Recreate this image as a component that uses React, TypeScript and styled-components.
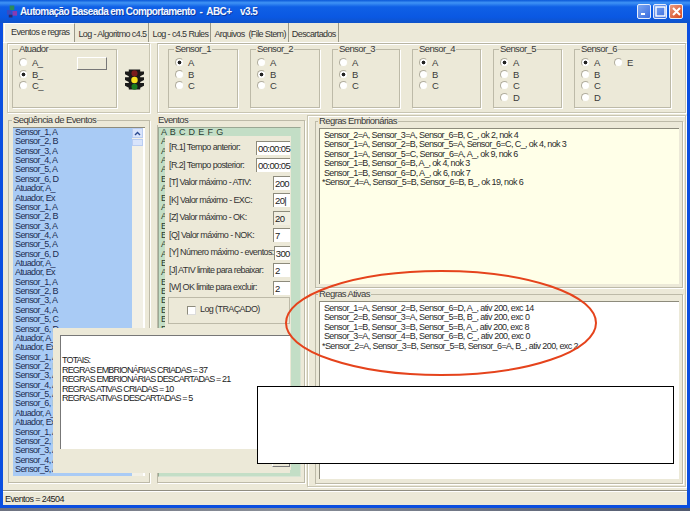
import React from "react";
import styled, { createGlobalStyle } from "styled-components";

const Global = createGlobalStyle`
  html, body { margin: 0; padding: 0; background: #5c6880; }
  * { box-sizing: border-box; }
  body { font-family: "Liberation Sans", Arial, sans-serif; font-size: 9px; letter-spacing: -0.6px; color: #2c2c2c; }
`;

const Screen = styled.div`
  position: relative;
  width: 690px;
  height: 511px;
  overflow: hidden;
  background: linear-gradient(90deg, #6d7280, #8a8f98 40%, #50596e);
`;
const Window = styled.div`
  width: 690px;
  height: 508px;
  display: flex;
  flex-direction: column;
  background: #0b4fe0;
  padding: 0 3px 3px 3px;
`;
const TitleBar = styled.div`
  height: 23px;
  margin: 0 -3px;
  padding: 0 7px 0 6px;
  display: flex;
  align-items: center;
  background: linear-gradient(180deg, #0a58d8 0%, #3f93f5 12%, #0f60e6 30%, #0a58e2 75%, #0f52c8 100%);
`;
const Title = styled.div`
  flex: 1;
  margin-left: 2px;
  font-weight: 700;
  font-size: 10px;
  letter-spacing: -0.6px;
  color: #f4f8ff;
  white-space: pre;
  text-shadow: 1px 1px 0 #0a3aa0;
`;
const WinBtn = styled.div<{ $close?: boolean }>`
  width: 14px;
  height: 15px;
  margin-left: 2px;
  border: 1px solid #e8eefc;
  border-radius: 2px;
  display: flex;
  align-items: center;
  justify-content: center;
  background: ${(p) => (p.$close ? "linear-gradient(135deg,#e89a80,#d8481c)" : "linear-gradient(135deg,#7ca6f0,#3a6ce0)")};
`;
const Client = styled.div`
  flex: 1;
  display: flex;
  flex-direction: column;
  background: #ece9d8;
  min-height: 0;
`;
const TabStrip = styled.div`
  height: 19px;
  display: flex;
  align-items: center;
  padding: 0 0 0 1px;
  color: #333;
`;
const Tab = styled.div<{ $active?: boolean }>`
  height: 100%;
  display: flex;
  align-items: center;
  padding: ${(p) => (p.$active ? "0 5px 2px 6px" : "3px 2px 0 3px")};
  white-space: pre;
  border-right: 1px solid #9a9888;
  ${(p) => (p.$active ? "border-left: 1px solid #fff; border-top: 1px solid #fff;" : "")}
  background: ${(p) => (p.$active ? "#f1efe2" : "transparent")};
`;
const TabPanel = styled.div`
  flex: 1;
  min-height: 0;
  display: flex;
  flex-direction: column;
  border-top: 1px solid #fff;
  border-bottom: 1px solid #8f8d80;
  padding: 0 1px 0 4px;
`;
const TopRow = styled.div`
  height: 70px;
  display: flex;
  gap: 7px;
`;
const Frame = styled.div<{ $w?: number }>`
  ${(p) => (p.$w ? `width:${p.$w}px;` : "flex:1;")}
  border: 1px solid #c8c5b2;
  border-top-color: #b8b5a2;
  box-shadow: inset 1px 1px 0 #fff, 1px 1px 0 #fff;
  display: flex;
  align-items: flex-start;
  padding: 0 0 0 ${(p) => (p.$w ? 4 : 10)}px;
`;
const Group = styled.fieldset<{ $w: number }>`
  margin: 0;
  padding: 3px 0 0 6px;
  width: ${(p) => p.$w}px;
  height: 64px;
  border: 1px solid #bdbaa8;
  box-shadow: 1px 1px 0 #fff;
  display: flex;
`;
const Legend = styled.legend`
  padding: 0 1px;
  margin-left: -1px;
  font-size: 9.5px;
  line-height: 10px;
  color: #3a3a3a;
`;
const RadioCol = styled.div`
  display: flex;
  flex-direction: column;
  width: 33px;
`;
const RadioRow = styled.div`
  height: 11.6px;
  display: flex;
  align-items: center;
  gap: 4px;
  font-size: 9.5px;
  color: #3a3a3a;
`;
const RadioDot = styled.span<{ $on?: boolean }>`
  width: 9px;
  height: 9px;
  border-radius: 50%;
  background: ${(p) => (p.$on ? "radial-gradient(circle, #222 0 1.6px, #fff 2.2px)" : "#fff")};
  border: 1px solid #b0ad9c;
  border-bottom-color: #ece9d8;
  border-right-color: #ece9d8;
  flex: none;
`;
const PushBtn = styled.div`
  width: 30px;
  height: 13px;
  margin: 0 0 0 25px;
  background: #ece9d8;
  border: 1px solid #fff;
  border-right-color: #777;
  border-bottom-color: #777;
`;
const Light = styled.svg`
  width: 19px;
  height: 25px;
  margin: 24px 0 0 8px;
  flex: none;
`;
const MainRow = styled.div`
  flex: 1;
  min-height: 0;
  display: flex;
  padding-top: 2px;
`;
const EventsBox = styled.fieldset`
  margin: 0 0 0 1px;
  padding: 2px 4px 7px 4px;
  width: 142px;
  height: 368px;
  border: 1px solid #bdbaa8;
  box-shadow: 1px 1px 0 #fff;
  display: flex;
`;
const SeqList = styled.div`
  flex: 1;
  height: 349px;
  display: flex;
  background: #fff;
  overflow: hidden;
  border-top: 1px solid #8d8b7c;
`;
const SeqItems = styled.div`
  width: 119px;
  height: 100%;
  background: #a9cbf5;
  overflow: hidden;
  padding: 0 0 0 2px;
  color: #1c2c52;
  line-height: 9.37px;
`;
const SeqRow = styled.div`
  height: 9.37px;
  white-space: pre;
`;
const ScrollTrack = styled.div`
  width: 11px;
  background: #f2f0e6;
  display: flex;
  flex-direction: column;
`;
const ScrollUp = styled.div`
  height: 10px;
  background: #d8e4fb;
  border: 1px solid #b9cdf2;
  display: flex;
  align-items: center;
  justify-content: center;
`;
const ScrollThumb = styled.div`
  height: 7px;
  margin-top: 1px;
  background: #d8e4fb;
  border: 1px solid #b9cdf2;
`;
const MidBox = styled(EventsBox)`
  margin-left: 7px;
  width: 148px;
  padding: 2px 0 0 0;
`;
const GreenList = styled.div`
  position: relative;
  width: 143px;
  height: 350px;
  background: #c3dec6;
  border: 1px solid #d8e4d4;
  border-top-color: #9aa894;
  border-left-color: #9aa894;
  overflow: hidden;
  padding-left: 2px;
  line-height: 9.37px;
  color: #2c3c30;
`;
const Params = styled.div`
  position: absolute;
  left: 6px;
  top: 8px;
  width: 126px;
  bottom: 6px;
  background: #ece9d8;
  display: flex;
  flex-direction: column;
  padding: 3px 1px 0 4px;
`;
const ParamRow = styled.div`
  height: 17.5px;
  display: flex;
  align-items: center;
  justify-content: space-between;
  color: #333;
  white-space: pre;
`;
const ParamInput = styled.div<{ $w: number; $grey?: boolean }>`
  width: ${(p) => p.$w}px;
  height: 14px;
  background: ${(p) => (p.$grey ? "#f1efe2" : "#fff")};
  border-top: 1px solid #8d8b7c;
  border-left: 1px solid #8d8b7c;
  font-size: 9.5px;
  line-height: 13px;
  padding-left: 1px;
  color: #222;
`;
const LogBox = styled.div`
  width: 122px;
  height: 27px;
  margin-left: -1px;
  border: 1px solid #bdbaa8;
  display: flex;
  align-items: center;
  padding-left: 18px;
  gap: 4px;
  color: #333;
`;
const Check = styled.span`
  width: 9px;
  height: 9px;
  background: #fff;
  border: 1px solid #8d8b7c;
  border-right-color: #ddd;
  border-bottom-color: #ddd;
`;
const RulesCol = styled.div`
  flex: 1;
  display: flex;
  flex-direction: column;
  margin: 0 0 3px 2px;
  padding: 0 2px 0 7px;
  gap: 1px;
  border: 1px solid #c8c5b2;
  box-shadow: inset 1px 1px 0 #fff, 1px 1px 0 #fff;
`;
const RuleBox = styled.fieldset<{ $h: number }>`
  margin: 0;
  padding: 2px 3px 4px 3px;
  height: ${(p) => p.$h}px;
  border: 1px solid #bdbaa8;
  box-shadow: 1px 1px 0 #fff;
  display: flex;
`;
const RuleText = styled.div<{ $bg: string; $h: number }>`
  flex: 1;
  height: ${(p) => p.$h}px;
  background: ${(p) => p.$bg};
  border-top: 1px solid #8d8b7c;
  border-left: 1px solid #8d8b7c;
  padding: 2px 0 0 2px;
  line-height: 9.37px;
  color: #2a2a2a;
  white-space: pre;
`;
const StatusBar = styled.div`
  height: 14px;
  display: flex;
  align-items: center;
  padding-left: 2px;
  color: #222;
  border-top: 1px solid #fff;
`;
const Dialog = styled.div`
  position: absolute;
  left: 53px;
  top: 328px;
  width: 237px;
  height: 145px;
  background: #ece9d8;
  padding: 7px 0 0 7px;
  display: flex;
  flex-direction: column;
  align-items: flex-end;
`;
const DialogText = styled.div`
  width: 100%;
  height: 114px;
  background: #fff;
  border-top: 1px solid #777;
  border-left: 1px solid #777;
  padding: 20px 0 0 1px;
  letter-spacing: -0.85px;
  line-height: 9.5px;
  color: #1c1c1c;
  white-space: pre;
`;
const DialogBtn = styled.div`
  width: 18px;
  height: 15px;
  margin: 3px 0 0 0;
  background: #ece9d8;
  border: 1px solid #fff;
  border-right-color: #777;
  border-bottom-color: #777;
`;
const WhiteOut = styled.div`
  position: absolute;
  left: 257px;
  top: 386px;
  width: 417px;
  height: 78px;
  background: #fff;
  border: 1px solid #000;
`;
const Ellipse = styled.svg`
  position: absolute;
  left: 280px;
  top: 265px;
  width: 322px;
  height: 116px;
  pointer-events: none;
`;
const SensorRow = styled.div`
  display: flex;
`;
const Spacer = styled.div<{ $w: number }>`
  width: ${(p) => p.$w}px;
  flex: none;
`;

const sensors: { name: string; w: number; opts: string[]; on: string; gap: number; extra?: string }[] = [
  { name: "Sensor_1", w: 70, opts: ["A", "B", "C"], on: "A", gap: 11 },
  { name: "Sensor_2", w: 70, opts: ["A", "B", "C"], on: "B", gap: 12 },
  { name: "Sensor_3", w: 68, opts: ["A", "B", "C"], on: "B", gap: 12 },
  { name: "Sensor_4", w: 69, opts: ["A", "B", "C"], on: "A", gap: 12 },
  { name: "Sensor_5", w: 69, opts: ["A", "B", "C", "D"], on: "A", gap: 12 },
  { name: "Sensor_6", w: 97, opts: ["A", "B", "C", "D"], on: "A", gap: 12, extra: "E" },
];

const cycle = (a: string, b: string, c: string, d: string, e: string, f: string) => [
  `Sensor_1, ${a}`, `Sensor_2, ${b}`, `Sensor_3, ${c}`, `Sensor_4, ${d}`, `Sensor_5, ${e}`, `Sensor_6, ${f}`, "Atuador, A_", "Atuador, Ex",
];
const seq = [
  ...cycle("A", "B", "A", "A", "A", "D"),
  ...cycle("A", "B", "A", "A", "A", "D"),
  ...cycle("A", "B", "A", "A", "C", "D"),
  ...cycle("A", "B", "A", "A", "A", "D"),
  ...cycle("A", "B", "A", "A", "A", "D"),
].slice(0, 37);

const greens = "A,A,A,A,A,E,A,E,A,A,E,E,A,A,E,A,E,E,E,E,E,E,A,A,E,E,A,A,E,E,E,A,A,E,E,E,E".split(",");

const params: [string, string, number, boolean?][] = [
  ["[R.1] Tempo anterior:", "00:00:05", 34],
  ["[R.2] Tempo posterior:", "00:00:05", 34],
  ["[T] Valor máximo - ATIV:", "200", 17],
  ["[K] Valor máximo - EXC:", "20|", 17],
  ["[Z] Valor máximo - OK:", "20", 17, true],
  ["[Q] Valor máximo - NOK:", "7", 17],
  ["[Y] Número máximo - eventos:", "300", 17],
  ["[J] ATIV limite para rebaixar:", "2", 17],
  ["[W] OK limite para excluir:", "2", 17],
];

const embr = [
  " Sensor_2=A, Sensor_3=A, Sensor_6=B, C_, ok 2, nok 4",
  " Sensor_1=A, Sensor_2=B, Sensor_5=A, Sensor_6=C, C_, ok 4, nok 3",
  " Sensor_1=A, Sensor_5=C, Sensor_6=A, A_, ok 9, nok 6",
  " Sensor_1=B, Sensor_6=B, A_, ok 4, nok 3",
  " Sensor_1=B, Sensor_6=D, A_, ok 6, nok 7",
  "*Sensor_4=A, Sensor_5=B, Sensor_6=B, B_, ok 19, nok 6",
].join("\n");
const ativ = [
  " Sensor_1=A, Sensor_2=B, Sensor_6=D, A_, ativ 200, exc 14",
  " Sensor_2=B, Sensor_3=A, Sensor_5=B, B_, ativ 200, exc 0",
  " Sensor_1=B, Sensor_3=B, Sensor_5=B, A_, ativ 200, exc 8",
  " Sensor_3=A, Sensor_4=B, Sensor_6=B, C_, ativ 200, exc 0",
  "*Sensor_2=A, Sensor_3=B, Sensor_5=B, Sensor_6=A, B_, ativ 200, exc 2",
].join("\n");
const totals = [
  "TOTAIS:",
  "REGRAS EMBRIONÁRIAS CRIADAS = 37",
  "REGRAS EMBRIONÁRIAS DESCARTADAS = 21",
  "REGRAS ATIVAS CRIADAS = 10",
  "REGRAS ATIVAS DESCARTADAS = 5",
].join("\n");

const Radio = ({ label, on }: { label: string; on?: boolean }) => (
  <RadioRow>
    <RadioDot $on={on} />
    {label}
  </RadioRow>
);

export default function App() {
  return (
    <Screen>
      <Global />
      <Window>
        <TitleBar>
          <svg width="12" height="15" viewBox="0 0 13 15">
            <rect x="4" y="1" width="5" height="5" fill="#2a8a5a" />
            <rect x="1" y="6" width="5" height="5" fill="#3a4ac0" />
            <rect x="7" y="7" width="5" height="5" fill="#8a3ab0" />
            <rect x="3" y="11" width="4" height="3" fill="#2a2a70" />
          </svg>
          <Title>{"Automação Baseada em Comportamento  -  ABC+    v3.5"}</Title>
          <WinBtn>
            <svg width="9" height="9" viewBox="0 0 9 9"><rect x="1" y="6" width="4" height="2" fill="#fff" /></svg>
          </WinBtn>
          <WinBtn>
            <svg width="11" height="11" viewBox="0 0 11 11"><rect x="1" y="1" width="9" height="9" fill="none" stroke="#fff" strokeWidth="1.4" /></svg>
          </WinBtn>
          <WinBtn $close>
            <svg width="11" height="11" viewBox="0 0 11 11"><path d="M2 2l7 7M9 2l-7 7" stroke="#fff" strokeWidth="2" /></svg>
          </WinBtn>
        </TitleBar>
        <Client>
          <TabStrip>
            <Tab $active>Eventos e regras</Tab>
            <Tab>Log - Algoritmo c4.5</Tab>
            <Tab>Log - c4.5 Rules</Tab>
            <Tab>Arquivos  (File Stem)</Tab>
            <Tab>Descartados</Tab>
          </TabStrip>
          <TabPanel>
            <TopRow>
              <Frame $w={143}>
                <Group $w={105}>
                  <Legend>Atuador</Legend>
                  <RadioCol>
                    <Radio label="A_" />
                    <Radio label="B_" on />
                    <Radio label="C_" />
                  </RadioCol>
                  <PushBtn />
                </Group>
                <Light viewBox="0 0 20 25">
                  <path d="M0 3h4V1h12v2h4v3l-4 2v1h4v3l-4 2v1h4v3l-4 2v2H4v-2l-4-2v-3h4v-1l-4-2V9h4V8L0 6z" fill="#1a1a1a" />
                  <circle cx="10" cy="5" r="3.2" fill="#7a1c1c" />
                  <circle cx="10" cy="12" r="3.4" fill="#f6e020" />
                  <circle cx="10" cy="19" r="3.2" fill="#1a7a20" />
                </Light>
              </Frame>
              <Frame>
                <SensorRow>
                  {sensors.map((s, i) => (
                    <React.Fragment key={s.name}>
                      {i > 0 && <Spacer $w={s.gap} />}
                      <Group $w={s.w}>
                        <Legend>{s.name}</Legend>
                        <RadioCol>
                          {s.opts.map((o) => (
                            <Radio key={o} label={o} on={o === s.on} />
                          ))}
                        </RadioCol>
                        {s.extra && (
                          <RadioCol>
                            <Radio label={s.extra} />
                          </RadioCol>
                        )}
                      </Group>
                    </React.Fragment>
                  ))}
                </SensorRow>
              </Frame>
            </TopRow>
            <MainRow>
              <EventsBox>
                <Legend>Seqüência de Eventos</Legend>
                <SeqList>
                  <SeqItems>
                    {seq.map((t, i) => (
                      <SeqRow key={i}>{t}</SeqRow>
                    ))}
                  </SeqItems>
                  <ScrollTrack>
                    <ScrollUp>
                      <svg width="7" height="5" viewBox="0 0 7 5"><path d="M1 4l2.5-2.5L6 4" fill="none" stroke="#2a4a90" strokeWidth="1.4" /></svg>
                    </ScrollUp>
                    <ScrollThumb />
                  </ScrollTrack>
                </SeqList>
              </EventsBox>
              <MidBox>
                <Legend>Eventos</Legend>
                <GreenList>
                  {greens.map((g, i) => (
                    <SeqRow key={i}>{i === 0 ? "A  B  C  D  E  F  G" : g}</SeqRow>
                  ))}
                  <Params>
                    {params.map(([label, value, w, grey]) => (
                      <ParamRow key={label}>
                        {label}
                        <ParamInput $w={w} $grey={grey}>{value}</ParamInput>
                      </ParamRow>
                    ))}
                    <LogBox>
                      <Check />
                      Log (TRAÇADO)
                    </LogBox>
                  </Params>
                </GreenList>
              </MidBox>
              <RulesCol>
                <RuleBox $h={172}>
                  <Legend>Regras Embrionárias</Legend>
                  <RuleText $bg="#ffffe8" $h={156}>{embr}</RuleText>
                </RuleBox>
                <RuleBox $h={195}>
                  <Legend>Regras Ativas</Legend>
                  <RuleText $bg="#ffffff" $h={178}>{ativ}</RuleText>
                </RuleBox>
              </RulesCol>
            </MainRow>
          </TabPanel>
          <StatusBar>Eventos = 24504</StatusBar>
        </Client>
      </Window>
      <Dialog>
        <DialogText>{totals}</DialogText>
        <DialogBtn />
      </Dialog>
      <WhiteOut />
      <Ellipse viewBox="0 0 322 116">
        <ellipse cx="161" cy="58" rx="155" ry="52" fill="none" stroke="#e5431c" strokeWidth="2" />
      </Ellipse>
    </Screen>
  );
}
